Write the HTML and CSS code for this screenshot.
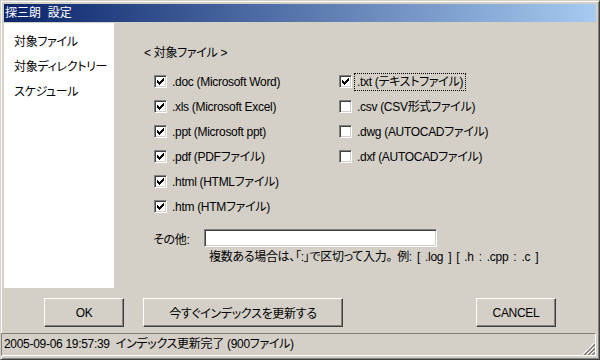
FILE: index.html
```html
<!DOCTYPE html>
<html lang="ja">
<head>
  <meta charset="UTF-8" />
  <title>探三朗 設定</title>
  <link rel="stylesheet" href="styles.css">
</head>
<body>

  <div class="window">

    <!-- Title -->
    <div class="titlebar">探三朗&nbsp; 設定</div>

    <div class="main">
      <!-- Left menu -->
      <div class="sidebar">
        <div class="menu-item">対象ファイル</div>
        <div class="menu-item">対象ディレクトリー</div>
        <div class="menu-item">スケジュール</div>
      </div>

      <!-- Settings -->
      <div class="pane">
        <div class="heading">&lt; 対象ファイル &gt;</div>

        <div class="checks">
          <div class="col col1">
            <div class="row"><span class="cb"><svg viewBox="1 1 11 11"><path d="M3 5h1v3H3zM4 6h1v3H4zM5 7h1v3H5zM6 6h1v3H6zM7 5h1v3H7zM8 4h1v3H8zM9 3h1v3H9z"/></svg></span><span class="label">.doc (Microsoft Word)</span></div>
            <div class="row"><span class="cb"><svg viewBox="1 1 11 11"><path d="M3 5h1v3H3zM4 6h1v3H4zM5 7h1v3H5zM6 6h1v3H6zM7 5h1v3H7zM8 4h1v3H8zM9 3h1v3H9z"/></svg></span><span class="label">.xls (Microsoft Excel)</span></div>
            <div class="row"><span class="cb"><svg viewBox="1 1 11 11"><path d="M3 5h1v3H3zM4 6h1v3H4zM5 7h1v3H5zM6 6h1v3H6zM7 5h1v3H7zM8 4h1v3H8zM9 3h1v3H9z"/></svg></span><span class="label">.ppt (Microsoft ppt)</span></div>
            <div class="row"><span class="cb"><svg viewBox="1 1 11 11"><path d="M3 5h1v3H3zM4 6h1v3H4zM5 7h1v3H5zM6 6h1v3H6zM7 5h1v3H7zM8 4h1v3H8zM9 3h1v3H9z"/></svg></span><span class="label">.pdf (PDFファイル)</span></div>
            <div class="row"><span class="cb"><svg viewBox="1 1 11 11"><path d="M3 5h1v3H3zM4 6h1v3H4zM5 7h1v3H5zM6 6h1v3H6zM7 5h1v3H7zM8 4h1v3H8zM9 3h1v3H9z"/></svg></span><span class="label">.html (HTMLファイル)</span></div>
            <div class="row"><span class="cb"><svg viewBox="1 1 11 11"><path d="M3 5h1v3H3zM4 6h1v3H4zM5 7h1v3H5zM6 6h1v3H6zM7 5h1v3H7zM8 4h1v3H8zM9 3h1v3H9z"/></svg></span><span class="label">.htm (HTMファイル)</span></div>
          </div>
          <div class="col col2">
            <div class="row"><span class="cb"><svg viewBox="1 1 11 11"><path d="M3 5h1v3H3zM4 6h1v3H4zM5 7h1v3H5zM6 6h1v3H6zM7 5h1v3H7zM8 4h1v3H8zM9 3h1v3H9z"/></svg></span><span class="label focus">.txt (テキストファイル)</span></div>
            <div class="row"><span class="cb"></span><span class="label">.csv (CSV形式ファイル)</span></div>
            <div class="row"><span class="cb"></span><span class="label">.dwg (AUTOCADファイル)</span></div>
            <div class="row"><span class="cb"></span><span class="label">.dxf (AUTOCADファイル)</span></div>
          </div>
        </div>

        <div class="other">
          <span class="other-label">その他:</span>
          <input type="text" class="field">
        </div>
        <div class="hint">複数ある場合は、「:」で区切って入力。 例: [ .log ] [ .h : .cpp : .c ]</div>
      </div>
    </div>

    <!-- Buttons -->
    <div class="buttons">
      <button class="btn btn-ok">OK</button>
      <button class="btn btn-update">今すぐインデックスを更新する</button>
      <button class="btn btn-cancel">CANCEL</button>
    </div>

    <!-- Status -->
    <div class="statusbar">
      2005-09-06 19:57:39&nbsp; インデックス更新完了 (900ファイル)
      <svg class="grip" width="12" height="12" viewBox="0 0 12 12">
        <path d="M11 0L0 11M11 4L4 11M11 8L8 11" stroke="#fff" stroke-width="1"/>
        <path d="M12 1L1 12M12 2L2 12M12 5L5 12M12 6L6 12M12 9L9 12M12 10L10 12" stroke="#808080" stroke-width="1"/>
      </svg>
    </div>

  </div>

</body>
</html>
```

FILE: styles.css
```css
body {
  margin: 0;
  font-family: "Liberation Sans", "Noto Sans CJK JP", sans-serif;
  font-size: 12px;
  font-feature-settings: "palt";
  letter-spacing: -0.3px;
  color: #000;
}
.window {
  width: 600px;
  height: 360px;
  box-sizing: border-box;
  background: #d4d0c8;
  border: 1px solid;
  border-color: #d4d0c8 #404040 #404040 #d4d0c8;
  box-shadow: inset 1px 1px #fff, inset -1px -1px #808080;
  padding: 3px;
  display: flex;
  flex-direction: column;
}
.titlebar {
  height: 18px;
  line-height: 18px;
  padding-left: 1px;
  color: #fff;
  font-size: 12px;
  font-feature-settings: normal;
  letter-spacing: 0;
  background: linear-gradient(to right, #0a246a, #a6caf0);
  margin-bottom: 1px;
}
.main {
  display: flex;
  height: 265px;
}
.sidebar {
  width: 110px;
  background: #fff;
  padding: 7px 0 0 10px;
  box-sizing: border-box;
}
.menu-item {
  height: 25px;
  line-height: 25px;
  white-space: nowrap;
}
.pane {
  flex: 1;
  padding: 22px 0 0 30px;
}
.heading {
  height: 16px;
  line-height: 16px;
}
.checks {
  display: flex;
  margin-top: 8px;
  padding-left: 10px;
}
.col1 {
  width: 185px;
}
.row {
  height: 25px;
  display: flex;
  align-items: center;
  white-space: nowrap;
}
.cb {
  width: 13px;
  height: 13px;
  box-sizing: border-box;
  border: 1px solid;
  border-color: #808080 #fff #fff #808080;
  box-shadow: inset 1px 1px #404040, inset -1px -1px #d4d0c8;
  background: #fff;
  flex-shrink: 0;
}
.cb svg {
  display: block;
  width: 11px;
  height: 11px;
  shape-rendering: crispEdges;
}
.label {
  margin-left: 2px;
  padding: 0 2px;
  height: 16px;
  line-height: 16px;
  border: 1px dotted transparent;
}
.label.focus {
  border-color: #000;
}
.other {
  display: flex;
  align-items: center;
  margin-top: 10px;
  padding-left: 9px;
}
.other-label {
  width: 51px;
}
.field {
  width: 233px;
  height: 18px;
  box-sizing: border-box;
  margin: 0;
  padding: 0 2px;
  border: 1px solid;
  border-color: #808080 #fff #fff #808080;
  box-shadow: inset 1px 1px #404040, inset -1px -1px #d4d0c8;
  background: #fff;
  outline: none;
}
.hint {
  margin-top: 2px;
  padding-left: 65px;
  height: 16px;
  line-height: 16px;
  word-spacing: 2px;
  white-space: nowrap;
}
.buttons {
  display: flex;
  margin-top: 10px;
  padding: 0 40px;
}
.btn {
  height: 29px;
  box-sizing: border-box;
  border: 1px solid;
  border-color: #fff #404040 #404040 #fff;
  box-shadow: inset -1px -1px #808080;
  background: #d4d0c8;
  font-family: "Liberation Sans", "Noto Sans CJK JP", sans-serif;
  font-size: 12px;
  font-feature-settings: "palt";
  letter-spacing: -0.3px;
  color: #000;
  padding: 0;
}
.btn-ok {
  width: 80px;
}
.btn-update {
  width: 200px;
  margin-left: 19px;
}
.btn-cancel {
  width: 80px;
  margin-left: auto;
}
.statusbar {
  position: relative;
  margin: 6px 0 0 -3px;
  height: 23px;
  box-sizing: border-box;
  line-height: 21px;
  padding-left: 2px;
  border: 1px solid;
  border-color: #808080 #fff #fff #808080;
  white-space: nowrap;
}
.grip {
  position: absolute;
  right: 0;
  bottom: 0;
}
```
